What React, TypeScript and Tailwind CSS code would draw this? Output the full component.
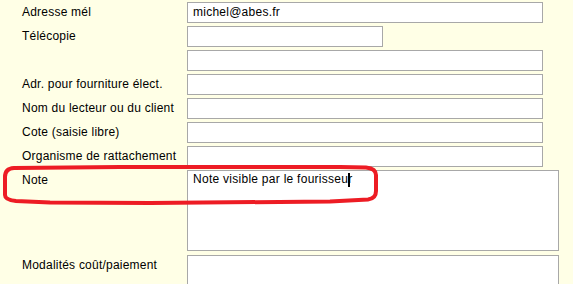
import React from "react";

const font = { fontFamily: '"Liberation Sans", Arial, sans-serif' };

function Row({ label, children, className = "" }: { label: string; children?: React.ReactNode; className?: string }) {
  return (
    <div className={`flex ${className}`}>
      <div className="w-[165px] shrink-0 text-[12px] leading-[21px] tracking-[0.22px] text-[#000]">{label}</div>
      {children}
    </div>
  );
}

function Input({ w, value }: { w: string; value?: string }) {
  return (
    <div className={`${w} h-[21px] border border-[#a8a8a8] bg-white px-[5px] text-[12px] leading-[19px] tracking-[0.25px] text-[#000]`}>{value}</div>
  );
}

export default function App() {
  return (
    <div className="relative w-[573px] h-[284px] overflow-hidden bg-[#ffffe6]" style={font}>
      <div className="flex flex-col gap-[3px] pt-[2px] pl-[22px]">
        <Row label="Adresse mél"><Input w="w-[356px]" value="michel@abes.fr" /></Row>
        <Row label="Télécopie"><Input w="w-[196px]" /></Row>
        <Row label=""><Input w="w-[356px]" /></Row>
        <Row label="Adr. pour fourniture élect."><Input w="w-[356px]" /></Row>
        <Row label="Nom du lecteur ou du client"><Input w="w-[356px]" /></Row>
        <Row label="Cote (saisie libre)"><Input w="w-[356px]" /></Row>
        <Row label="Organisme de rattachement"><Input w="w-[356px]" /></Row>
        <Row label="Note" className="mb-[1px]">
          <div className="w-[372px] h-[81px] border border-[#a8a8a8] bg-white px-[5px] pt-[1px] text-[12px] leading-[15px] tracking-[0.27px] text-[#000]">
            Note visible par le fourisseu
            <span className="inline-block w-[2px] h-[14px] bg-black align-middle -mr-[2px]" />
            r
          </div>
        </Row>
        <Row label="Modalités coût/paiement" className="items-start">
          <div className="w-[372px] h-[60px] border border-[#a8a8a8] bg-white" />
        </Row>
      </div>
      <svg className="absolute left-0 top-0 pointer-events-none" width="573" height="284">
        <path
          d="M 120 167 L 14 168 Q 5 168.5 5 177 L 5 195 Q 5 200 16 201 L 50 202.5 L 150 203 L 330 201.5 L 368 199.5 Q 376 198.5 376 191 L 376 175 Q 376 168.5 366 167.5 L 340 167 L 120 167 Z"
          fill="none"
          stroke="#ed1c24"
          strokeWidth="4"
        />
      </svg>
    </div>
  );
}
